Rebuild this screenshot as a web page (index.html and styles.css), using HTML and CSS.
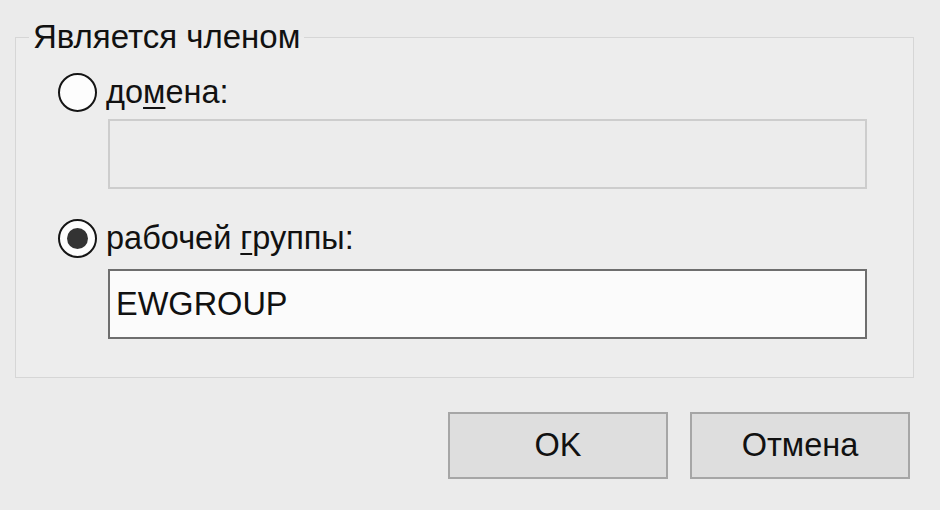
FILE: index.html
```html
<!DOCTYPE html>
<html lang="ru">
<head>
    <meta charset="UTF-8">
    <title>Является членом</title>
    <link rel="stylesheet" href="styles.css">
</head>
<body>

<div class="dialog">
    <fieldset class="member-of">
        <legend>Является членом</legend>

        <!-- Domain -->
        <label class="option">
            <span class="radio"></span>
            <span>до<u>м</u>ена:</span>
        </label>
        <div class="field disabled"></div>

        <!-- Workgroup -->
        <label class="option">
            <span class="radio checked"><span class="dot"></span></span>
            <span>рабочей <u>г</u>руппы:</span>
        </label>
        <div class="field">EWGROUP</div>
    </fieldset>

    <div class="buttons">
        <button type="button">OK</button>
        <button type="button">Отмена</button>
    </div>
</div>

</body>
</html>
```

FILE: styles.css
```css
body {
    margin: 0;
    padding: 0;
    width: 940px;
    height: 510px;
    background-color: #ebebeb;
    font-family: 'Liberation Sans', Arial, sans-serif;
    font-size: 32.5px;
    color: #111;
    overflow: hidden;
}
.dialog {
    padding: 20px 26px 0 15px;
    display: flex;
    flex-direction: column;
}
.member-of {
    margin: 0;
    padding: 19px 0 38px 13px;
    border: 1px solid #d6d6d6;
    background-color: #ededed;
    display: flex;
    flex-direction: column;
}
legend {
    padding: 0 4px;
    margin-left: 0;
    line-height: 34px;
    font-size: 33px;
}
.option {
    display: flex;
    align-items: center;
    gap: 9px;
    height: 39px;
    margin-left: 29px;
}
.option u {
    text-decoration-thickness: 2px;
    text-underline-offset: 4px;
}
.radio {
    width: 39px;
    height: 39px;
    box-sizing: border-box;
    border: 2.5px solid #151515;
    border-radius: 50%;
    background-color: #fdfdfd;
    display: flex;
    justify-content: center;
    align-items: center;
}
.dot {
    width: 21px;
    height: 21px;
    border-radius: 50%;
    background-color: #333;
}
.field {
    width: 759px;
    height: 70px;
    margin: 7px 0 0 79px;
    box-sizing: border-box;
    border: 2px solid #6e6e6e;
    background-color: #fbfbfb;
    padding: 0 0 0 6px;
    display: flex;
    align-items: center;
    font-size: 32.5px;
}
.field.disabled {
    border-color: #cdcdcd;
    background-color: #ececec;
    margin-bottom: 30px;
}
.option + .field:last-child {
    margin-top: 11px;
}
.buttons {
    display: flex;
    justify-content: flex-end;
    gap: 22px;
    margin: 34px 4px 0 0;
}
button {
    width: 220px;
    height: 67px;
    border: 2px solid #a6a6a6;
    background-color: #dedede;
    font-family: 'Liberation Sans', Arial, sans-serif;
    font-size: 32.5px;
    color: #111;
    padding: 0;
}
```
